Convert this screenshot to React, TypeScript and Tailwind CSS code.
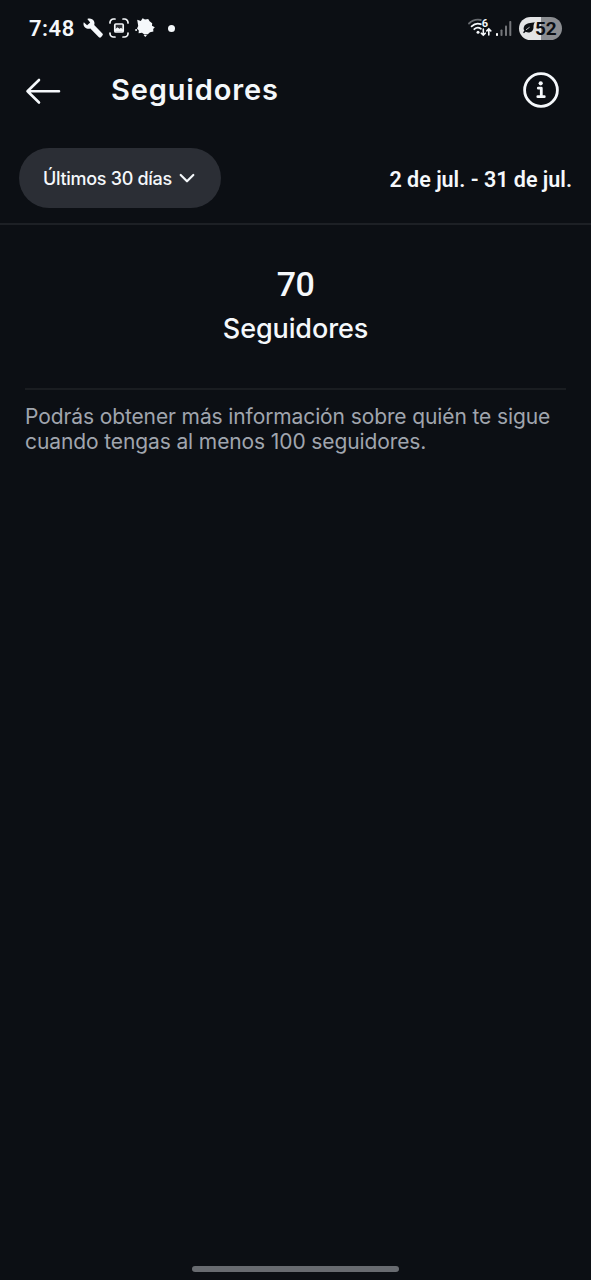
function StatusBar() {
  return (
    <div className="flex h-14 items-center justify-between pl-[29px] pr-[29px]">
      <div className="flex items-center">
        <span className="w-[54px] pt-px text-[22px] font-semibold leading-7 tracking-[0.5px]">
          7:48
        </span>
        {/* Wrench */}
        <svg className="h-5 w-5" viewBox="0 0 20 20" fill="currentColor">
          <path d="M.8 4.2 4.1 7.3 7.2 4.4 4.3 1C6.8 0 9.8.8 11 3.3c.6 1.3.6 2.3.2 3.6l8.2 8.6c.6.6.6 1.5 0 2.1L18 19.2c-.6.6-1.5.6-2.1 0l-8.6-8.6C3.4 11.8-.7 8.3.8 4.2Z" />
        </svg>
        {/* Screenshot */}
        <svg
          className="ml-1.5 h-5 w-5"
          viewBox="0 0 20 20"
          fill="none"
          stroke="currentColor"
          strokeWidth="1.7"
          strokeLinecap="round"
        >
          <path d="M1 5V4.5A3.5 3.5 0 0 1 4.5 1H6M14 1h1.5A3.5 3.5 0 0 1 19 4.5V5M19 15v.5a3.5 3.5 0 0 1-3.5 3.5H14M6 19H4.5A3.5 3.5 0 0 1 1 15.5V15" />
          <rect x="5.8" y="6" width="8.4" height="8" rx="1" />
          <path d="M6 11 8.5 8.7l2 1.6 1.2-.8L14 11.5v-5H6Z" fill="currentColor" fillOpacity=".15" stroke="none" />
          <path d="m6 13.5v-2.3l2.5-2 2 1.6 1.5-1 2 1.7v2Z" fill="currentColor" stroke="none" />
        </svg>
        {/* Leaf-shaped app badge */}
        <svg className="ml-1.5 h-5 w-5" viewBox="0 0 20 20" fill="currentColor">
          <path d="M2.2 1.8 5.8 3 7.6.2 10 1.6l3.2-.7 1.4 2.3 2.6 2-.2 2.6 2.8 1.5-1.6 1.8.2 2.4-3.4.8-2.2 2-3.4.2-2.4-1.8-3.4.5.2-2.6L2 10.5l1.2-2.4Z" />
          <circle cx="1.1" cy="12" r="1" />
          <path d="M8.6 17.1H12l-1.7 2Z" />
        </svg>
        <span className="ml-[13px] h-[7px] w-[7px] rounded-full bg-current" />
      </div>

      <div className="flex items-center">
        {/* Wi-Fi 6 with traffic arrows */}
        <svg className="h-5 w-6" viewBox="0 0 24 20" fill="none" stroke="currentColor" strokeWidth="1.8" strokeLinecap="round">
          <path d="M1 5.5C4.3 2.2 8.3 1.1 12.8 2" stroke="#686b70" />
          <path d="M3.6 8.4C6.3 5.7 9.6 5 12.8 6.2M6.3 11.2c2-1.9 4.4-2 6.6-.5" />
          <circle cx="10" cy="14.2" r="1.5" fill="currentColor" stroke="none" />
          <path d="M15.3 11v6m-2-1.8 2 2 2-2M20.8 17v-6m-2 1.9 2-2 2 2" strokeWidth="1.6" />
          <text x="13.8" y="8.6" fill="currentColor" stroke="none" className="text-[11px] font-bold">6</text>
        </svg>
        {/* Signal strength */}
        <svg className="ml-1 h-5 w-4" viewBox="0 0 16 20">
          <rect x="0" y="15" width="2" height="3" rx=".8" fill="#fff" />
          <rect x="4.5" y="11.5" width="2" height="6.5" rx=".8" fill="#74767a" />
          <rect x="9" y="7.5" width="2" height="10.5" rx=".8" fill="#74767a" />
          <rect x="13.3" y="3" width="2" height="15" rx=".8" fill="#74767a" />
        </svg>
        <div className="ml-[7px] flex h-[23px] w-[43px] items-center rounded-full bg-linear-to-r from-[#e3e4e6] from-[52%] to-[#8b8d91] to-[52%] pl-1 text-[#0c0f14]">
          <svg className="h-3 w-3" viewBox="0 0 12 12" fill="currentColor">
            <path d="M11.8.3C8 1.3 2.7.7 1 4.7c-.7 1.6-.3 3 .4 4L0 10.2l1 1 1.6-1.5c4.1 2.2 8.1-.6 7.9-4.5C10.4 3.4 11 1.7 11.8.3Z" />
            <path d="m3 7.8 3.6-2.6" stroke="#e3e4e6" strokeWidth=".8" />
          </svg>
          <span className="text-[19px] font-bold leading-[23px] tracking-[-0.2px]">52</span>
        </div>
      </div>
    </div>
  );
}

function BackArrow() {
  return (
    <svg
      className="h-7 w-9"
      viewBox="0 0 36 28"
      fill="none"
      stroke="currentColor"
      strokeWidth="2.6"
      strokeLinecap="round"
      strokeLinejoin="round"
    >
      <path d="M14 3 2.5 14.3 14 25.5M2.5 14.3H34" />
    </svg>
  );
}

function InfoIcon() {
  return (
    <svg className="h-9 w-9" viewBox="0 0 36 36" fill="none" stroke="currentColor">
      <circle cx="18" cy="18" r="16.4" strokeWidth="2.8" />
      <circle cx="17.7" cy="11.3" r="2.1" fill="currentColor" stroke="none" />
      <path d="M15.3 16.2h3v8M14.8 24.7h6.5" strokeWidth="2.8" strokeLinecap="round" strokeLinejoin="round" />
    </svg>
  );
}

export default function App() {
  return (
    <div className="flex h-screen min-h-[1280px] w-full flex-col bg-[#0c0f14] font-['Roboto',sans-serif] text-[#f5f8fb]">
      <StatusBar />

      <header className="flex h-[68px] items-center pl-[25px] pr-8">
        <button aria-label="Atrás" className="pt-0.5">
          <BackArrow />
        </button>
        <h1 className="ml-[50px] flex-1 font-['Inter',sans-serif] text-[29px] font-semibold leading-9 tracking-[0.85px]">
          Seguidores
        </h1>
        <button aria-label="Información">
          <InfoIcon />
        </button>
      </header>

      <div className="flex h-[101px] items-center justify-between border-b-2 border-[#1d2025] pl-[19px] pr-[19px] pt-6 pb-[15px]">
        <button className="flex h-[60px] w-[202px] items-center rounded-full bg-[#2b2e35] pl-6">
          <span className="w-[136px] whitespace-nowrap pt-px text-left font-['Inter',sans-serif] text-[18px] font-medium leading-6 tracking-[-0.3px]">
            Últimos 30 días
          </span>
          <svg
            className="h-4 w-4"
            viewBox="0 0 16 16"
            fill="none"
            stroke="currentColor"
            strokeWidth="2.2"
            strokeLinecap="round"
            strokeLinejoin="round"
          >
            <path d="m1.7 5 6.3 6.3L14.3 5" />
          </svg>
        </button>
        <span className="whitespace-nowrap pt-1 text-[21.5px] font-semibold leading-7">2 de jul. - 31 de jul.</span>
      </div>

      <main className="flex flex-1 flex-col px-[25px]">
        <section className="flex h-[165px] flex-col items-center border-b-2 border-[#1a1d21] pt-[37px]">
          <span className="text-[34px] font-medium leading-11 tracking-[-0.5px]">70</span>
          <span className="mt-[3px] font-['Inter',sans-serif] text-[27px] font-medium leading-10 tracking-[-0.1px]">
            Seguidores
          </span>
        </section>
        <p className="whitespace-nowrap pt-[14px] font-['Inter',sans-serif] text-[21px] leading-[25px] tracking-[-0.11px] text-[#a0a5ae]">
          Podrás obtener más información sobre quién te sigue
          <br />
          cuando tengas al menos 100 seguidores.
        </p>
      </main>

      <div className="flex h-[17px] justify-center">
        <div className="mt-[3px] h-1.5 w-[207px] rounded-full bg-[#686b70]" />
      </div>
    </div>
  );
}
